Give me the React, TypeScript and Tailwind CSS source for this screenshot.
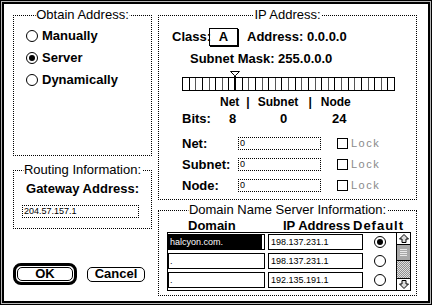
import type { ReactNode } from 'react'

function Group({ title, className, children }: { title: string; className: string; children?: ReactNode }) {
  return (
    <div className={`relative border border-dotted border-black ${className}`}>
      <span className="absolute left-1/2 top-[-9px] -translate-x-1/2 whitespace-nowrap bg-white px-px text-[13px] leading-[16px]">
        {title}
      </span>
      {children}
    </div>
  )
}

function Radio({ checked }: { checked?: boolean }) {
  return (
    <span className="flex h-[12px] w-[12px] shrink-0 items-center justify-center rounded-full border border-black bg-white">
      {checked && <span className="h-[6px] w-[6px] rounded-full bg-black" />}
    </span>
  )
}

function BitSlider() {
  // 32 bits, marker sits on bit 8 (class A)
  const lines = Array.from({ length: 31 }, (_, i) => Math.round(((i + 1) * 212) / 32) + 0.5)
  return (
    <svg width={214} height={21} className="block">
      <rect x={0.5} y={6.5} width={212} height={13} fill="white" stroke="black" />
      {lines.map((x, i) => (
        <line key={i} x1={x} x2={x} y1={7} y2={19} stroke={i % 2 ? '#555' : 'black'} />
      ))}
      <rect x={52} y={6} width={2} height={14} fill="black" />
      <path d="M48.5 0.5 H57.5 L53.5 4.5 V6 H52.5 V4.5 Z" fill="white" stroke="black" />
    </svg>
  )
}

function Arrow({ down }: { down?: boolean }) {
  return (
    <svg width={12} height={11} className={down ? 'rotate-180' : ''}>
      <path d="M6 1.5 L10.5 6 H8 V9.5 H4 V6 H1.5 Z" fill="#ddd" stroke="black" />
    </svg>
  )
}

const dnsRows = [
  { domain: 'halcyon.com.', ip: '198.137.231.1', selected: true },
  { domain: '.', ip: '198.137.231.1', selected: false },
  { domain: '.', ip: '192.135.191.1', selected: false },
]

export default function App() {
  return (
    <div className="h-[305px] w-[432px] bg-white font-['Liberation_Sans',Arial,sans-serif] text-black">
      <div className="h-full w-full border border-black bg-[#b8b8b8] p-px">
        <div className="flex h-full w-full border-2 border-black bg-white pl-[9px] pt-[11px]">
          {/* Left column */}
          <div className="flex w-[139px] flex-col">
            <Group title="Obtain Address:" className="h-[141px]">
              <div className="flex flex-col pl-[12px] pt-[9px] text-[13px] font-bold">
                <label className="flex h-[22px] items-center gap-[4px]">
                  <Radio /> Manually
                </label>
                <label className="flex h-[22px] items-center gap-[4px]">
                  <Radio checked /> Server
                </label>
                <label className="flex h-[22px] items-center gap-[4px]">
                  <Radio /> Dynamically
                </label>
              </div>
            </Group>

            <Group title="Routing Information:" className="mt-[14px] h-[59px]">
              <p className="pt-[10px] text-center text-[13px] font-bold leading-[16px]">Gateway Address:</p>
              <div className="ml-[8px] mt-[8px] h-[13px] w-[117px] border border-dotted border-black pl-px text-[9px] leading-[11px]">
                204.57.157.1
              </div>
            </Group>

            <div className="mt-[34px] flex items-center text-[13px] font-bold">
              <div className="rounded-[8px] border-[3px] border-black p-px">
                <button className="flex h-[14px] w-[56px] items-center justify-center rounded-[5px] border border-black">OK</button>
              </div>
              <button className="ml-[10px] flex h-[15px] w-[58px] items-center justify-center rounded-[5px] border border-black">
                Cancel
              </button>
            </div>
          </div>

          {/* Right column */}
          <div className="ml-[6px] flex w-[259px] flex-col">
            <Group title="IP Address:" className="h-[185px]">
              <div className="mt-[12px] flex h-[18px] items-center pl-[13px] text-[13px] font-bold">
                <span className="w-[37px] shrink-0">Class:</span>
                <span className="flex h-[18px] w-[29px] items-center justify-center border border-black shadow-[1px_1px_0_#000]">A</span>
                <span className="ml-[9px]">Address: 0.0.0.0</span>
              </div>
              <p className="mt-[5px] pl-[31px] text-[13px] font-bold leading-[16px]">Subnet Mask: 255.0.0.0</p>
              <div className="mt-[4px] pl-[23px]">
                <BitSlider />
              </div>
              <div className="mt-[2px] flex pl-[61px] text-[12px] font-bold leading-[16px]">
                <span>Net</span>
                <span className="ml-[7px]">|</span>
                <span className="ml-[8px]">Subnet</span>
                <span className="ml-[10px]">|</span>
                <span className="ml-[9px]">Node</span>
              </div>
              <div className="mt-[1px] flex pl-[23px] text-[13px] font-bold leading-[16px]">
                <span className="w-[47px] shrink-0">Bits:</span>
                <span className="w-[51px] shrink-0">8</span>
                <span className="w-[52px] shrink-0">0</span>
                <span>24</span>
              </div>
              <div className="mt-[10px] flex flex-col gap-[8px]">
                {['Net:', 'Subnet:', 'Node:'].map((label) => (
                  <div key={label} className="flex h-[13px] items-center pl-[23px]">
                    <span className="w-[56px] shrink-0 text-[13px] font-bold">{label}</span>
                    <span className="h-[13px] w-[83px] border border-dotted border-black pl-px text-[9px] leading-[11px]">0</span>
                    <span className="ml-[16px] h-[11px] w-[11px] border border-black" />
                    <span className="ml-[3px] text-[11px] tracking-[1.5px] text-[#8a8a8a]">Lock</span>
                  </div>
                ))}
              </div>
            </Group>

            <Group title="Domain Name Server Information:" className="mt-[10px] h-[86px]">
              <div className="mt-[8px] flex pl-[29px] text-[13px] font-bold leading-[13px]">
                <span className="w-[95px] shrink-0">Domain</span>
                <span className="w-[70px] shrink-0">IP Address</span>
                <span className="tracking-[1px]">Default</span>
              </div>
              <div className="ml-[8px] flex h-[59px] w-[244px] border border-black">
                <div className="flex w-[228px] flex-col gap-[3px] pt-px text-[9px] leading-[14px]">
                  {dnsRows.map((row, i) => (
                    <div key={i} className="flex h-[16px] items-center">
                      <div className="h-[16px] w-[97px] border border-black">
                        {row.selected ? (
                          <div className="mr-[2px] h-full bg-black pl-px text-white">{row.domain}</div>
                        ) : (
                          <div className="pl-px">{row.domain}</div>
                        )}
                      </div>
                      <div className="ml-[3px] h-[16px] w-[95px] border border-black pl-[2px]">{row.ip}</div>
                      <div className="flex flex-1 justify-center">
                        <Radio checked={row.selected} />
                      </div>
                    </div>
                  ))}
                </div>
                <div className="flex w-[14px] flex-col border-l border-black">
                  <div className="flex h-[12px] items-center justify-center border-b border-black">
                    <Arrow />
                  </div>
                  <div className="flex h-[16px] flex-col justify-center gap-px border-b border-black bg-[#a8a8a8] px-[3px]">
                    <span className="h-px bg-[#e8e8e8]" />
                    <span className="h-px bg-[#e8e8e8]" />
                    <span className="h-px bg-[#e8e8e8]" />
                    <span className="h-px bg-[#e8e8e8]" />
                  </div>
                  <div className="flex-1 bg-[repeating-conic-gradient(#909090_0_25%,#e0e0e0_0_50%)] [background-size:2px_2px]" />
                  <div className="flex h-[12px] items-center justify-center border-t border-black">
                    <Arrow down />
                  </div>
                </div>
              </div>
            </Group>
          </div>
        </div>
      </div>
    </div>
  )
}
